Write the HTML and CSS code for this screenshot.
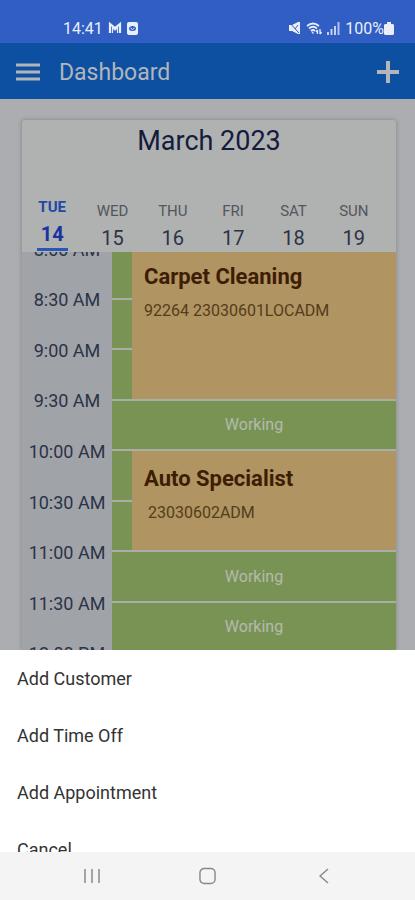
FILE: index.html
```html
<!DOCTYPE html>
<html lang="en">
<head>
    <meta charset="UTF-8">
    <meta name="viewport" content="width=device-width, initial-scale=1.0">
    <title>Dashboard</title>
    <link rel="stylesheet" href="styles.css">
</head>
<body>
    <div class="status-bar">
        <div class="status-group">
            <span>14:41</span>
            <svg width="14" height="12" viewBox="0 0 14 12" fill="none" stroke="currentColor">
                <path d="M2 11V2l5 4 5-4v9" stroke-width="2.200"/>
                <path d="M4.500 11V5l2.500 3 2.500-3v6" stroke-width="1.200"/>
            </svg>
            <svg width="11" height="13" viewBox="0 0 11 13">
                <rect width="11" height="13" rx="2" fill="currentColor"/>
                <ellipse cx="5.5" cy="6.5" rx="3.5" ry="2.5" fill="#305ec2"/>
                <path d="M3.5 6l2 1.500 2-1.500" fill="none" stroke="currentColor"/>
            </svg>
        </div>
        <div class="status-group">
            <svg width="12" height="12" viewBox="0 0 12 12">
                <path d="M0 3h3l6-3h2v12H9L3 9H0z" fill="currentColor"/>
                <path d="M0 0l10 11M6 7l3-4" stroke="#305ec2" fill="none"/>
            </svg>
            <svg width="16" height="13" viewBox="0 0 16 13" fill="none" stroke="currentColor" stroke-width="1.800">
                <path d="M1 4q6-5 12 0M3 6.500q4-3.500 8 0M5 9q2-2 4 0"/>
                <path d="M7.500 11.500L6 10M11.500 12V8M10 10l1.500-2M14 7v5M15.500 10L14 12" stroke-width="1.300"/>
            </svg>
            <svg width="13" height="13" viewBox="0 0 13 13" fill="currentColor">
                <path d="M0 10h2v3H0zM3.500 7h2v6h-2zM7 4h2v9H7z" opacity=".8"/>
                <path d="M10.500 0h2v13h-2z" opacity=".7"/>
            </svg>
            <div class="battery">
                <span>100%</span>
                <svg width="10" height="13" viewBox="0 0 10 13" fill="currentColor">
                    <path d="M3 0h4v2h2l1 1v9l-1 1H1l-1-1V3l1-1h2z"/>
                </svg>
            </div>
        </div>
    </div>

    <header class="app-bar">
        <button class="icon-button" aria-label="Menu">
            <svg width="24" height="18" viewBox="0 0 24 18" stroke="currentColor" stroke-width="3">
                <path d="M0 2h24M0 9h24M0 16h24"/>
            </svg>
        </button>
        <h1>Dashboard</h1>
        <button class="icon-button" aria-label="Add">
            <svg width="24" height="24" viewBox="0 0 24 24" stroke="currentColor" stroke-width="4">
                <path d="M12 1v22M1 12h22"/>
            </svg>
        </button>
    </header>

    <main class="dashboard">
        <section class="calendar">
            <h2>March 2023</h2>
            <div class="days">
                <button class="day active"><span>TUE</span><b>14</b></button>
                <button class="day"><span>WED</span><b>15</b></button>
                <button class="day"><span>THU</span><b>16</b></button>
                <button class="day"><span>FRI</span><b>17</b></button>
                <button class="day"><span>SAT</span><b>18</b></button>
                <button class="day"><span>SUN</span><b>19</b></button>
            </div>
            <div class="schedule">
                <div class="times">
                    <span>8:00 AM</span>
                    <span>8:30 AM</span>
                    <span>9:00 AM</span>
                    <span>9:30 AM</span>
                    <span>10:00 AM</span>
                    <span>10:30 AM</span>
                    <span>11:00 AM</span>
                    <span>11:30 AM</span>
                    <span>12:00 PM</span>
                </div>
                <div class="slots">
                    <div class="slot"></div>
                    <article class="event long">
                        <h3>Carpet Cleaning</h3>
                        <p>92264 23030601LOCADM</p>
                    </article>
                    <div class="slot"></div>
                    <div class="slot"></div>
                    <div class="slot working">Working</div>
                    <div class="slot"></div>
                    <article class="event">
                        <h3>Auto Specialist</h3>
                        <p>&nbsp;23030602ADM</p>
                    </article>
                    <div class="slot"></div>
                    <div class="slot working">Working</div>
                    <div class="slot working">Working</div>
                </div>
            </div>
        </section>
    </main>

    <div class="action-sheet">
        <button>Add Customer</button>
        <button>Add Time Off</button>
        <button>Add Appointment</button>
        <button>Cancel</button>
    </div>

    <nav class="nav-bar">
        <button aria-label="Recent apps">
            <svg width="16" height="16" viewBox="0 0 16 16" stroke="currentColor" stroke-width="1.500">
                <path d="M1 1v14M8 1v14M15 1v14"/>
            </svg>
        </button>
        <button aria-label="Home">
            <svg width="18" height="18" viewBox="0 0 18 18" fill="none" stroke="currentColor" stroke-width="1.500">
                <rect x="1" y="1" width="16" height="16" rx="4.500"/>
            </svg>
        </button>
        <button aria-label="Back">
            <svg width="10" height="16" viewBox="0 0 10 16" fill="none" stroke="currentColor" stroke-width="1.500">
                <path d="M9 1L1 8l8 7"/>
            </svg>
        </button>
    </nav>
</body>
</html>
```

FILE: styles.css
```css
* {
    margin: 0;
    padding: 0;
    box-sizing: border-box;
    font-family: Roboto, 'Liberation Sans', sans-serif;
}

body {
    display: flex;
    flex-direction: column;
    height: 100vh;
    overflow: hidden;
    background: #acadb0;
}

button {
    border: none;
    background: none;
    color: inherit;
    cursor: pointer;
}

svg {
    display: block;
}

/* Status bar */
.status-bar {
    display: flex;
    justify-content: space-between;
    padding: 14px 21px 0 63px;
    height: 43px;
    background: #305ec2;
    color: #e8eefc;
    font-size: 16px;
}

.status-group {
    display: flex;
    align-items: center;
    gap: 5px;
    height: 28px;
}

.battery {
    display: flex;
    align-items: center;
}

/* App bar */
.app-bar {
    display: flex;
    align-items: center;
    gap: 19px;
    height: 56px;
    padding: 2px 15px 0 16px;
    background: #0d50a1;
    color: #b2b5ba;
}

.app-bar h1 {
    flex: 1;
    font-size: 23px;
    font-weight: 400;
}

/* Calendar */
.dashboard {
    flex: 1;
    min-height: 0;
    display: flex;
    padding: 21px 19px 0 22px;
}

.calendar {
    flex: 1;
    min-width: 0;
    display: flex;
    flex-direction: column;
    background: #b0b1b1;
    border-radius: 3px 3px 0 0;
    box-shadow: 0 0 4px rgba(0, 0, 0, 0.25);
}

.calendar h2 {
    padding-top: 4px;
    color: #151b3d;
    font-size: 27px;
    line-height: 34px;
    font-weight: 400;
    text-align: center;
}

.days {
    display: flex;
    align-items: flex-end;
    height: 94px;
    padding-right: 12px;
}

.day {
    flex: 1;
    display: flex;
    flex-direction: column;
    align-items: center;
    color: #53565d;
    font-size: 15px;
    line-height: 26px;
}

.day b {
    color: #2c3345;
    font-size: 20px;
    line-height: 28px;
    font-weight: 400;
}

.day.active {
    padding-bottom: 1px;
    color: #2148a8;
    font-weight: 700;
}

.day.active b {
    border-bottom: 3px solid #2758b5;
    padding: 0 4px;
    color: #1834a0;
    font-weight: 700;
}

.schedule {
    flex: 1;
    min-height: 0;
    display: flex;
    overflow: hidden;
    background: #a9afa6;
}

.times {
    width: 90px;
    height: 455px;
    margin-top: -28px;
    display: grid;
    grid-auto-rows: 1fr;
    place-items: center;
    background: #a0a3a7;
    color: #2b3348;
    font-size: 18px;
}

.slots {
    flex: 1;
    height: 402px;
    margin-top: -3px;
    display: grid;
    grid-template-columns: 20px 1fr;
    grid-template-rows: repeat(8, 1fr);
    gap: 2px 0;
}

.slot {
    grid-column: 1;
    background: #799354;
}

.working {
    grid-column: 1 / 3;
    display: flex;
    align-items: center;
    justify-content: center;
    color: #b4baae;
    font-size: 16px;
}

.event {
    grid-column: 2;
    grid-row: 5 / span 2;
    padding: 14px 12px;
    background: #b09462;
    color: #3d1d04;
}

.event.long {
    grid-row: 1 / span 3;
}

.event h3 {
    font-size: 22px;
    line-height: 28px;
    font-weight: 700;
}

.event p {
    margin-top: 8px;
    color: #543d1b;
    font-size: 16px;
    line-height: 24px;
}

/* Bottom sheet */
.action-sheet {
    height: 202px;
    overflow: hidden;
    background: #fff;
    color: #333;
}

.action-sheet button {
    display: block;
    width: 100%;
    height: 57px;
    padding-left: 17px;
    font-size: 18px;
    text-align: left;
}

.nav-bar {
    display: flex;
    justify-content: space-between;
    align-items: center;
    height: 48px;
    padding: 0 20%;
    background: #f4f4f4;
    color: #888;
}

.nav-bar button {
    width: 17px;
    display: flex;
    justify-content: center;
}
```
